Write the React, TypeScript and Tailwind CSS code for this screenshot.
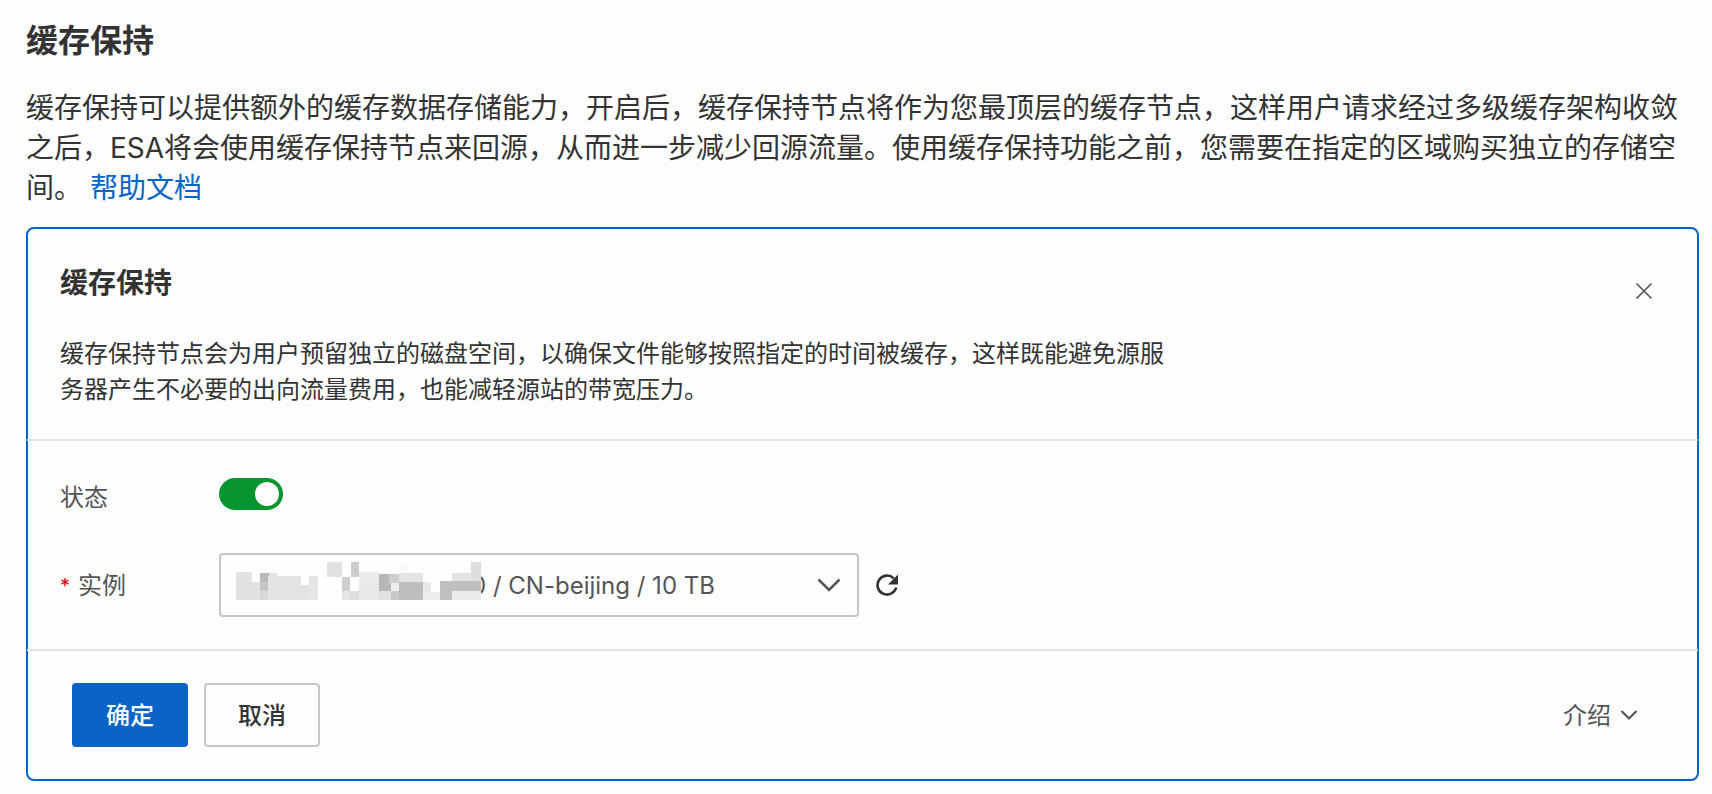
import React, { useState } from "react";

interface Cell {
  x: number;
  y: number;
  w: number;
  h: number;
  fill: string;
}

// Blocks that cover the private part of the instance id
const MASK_CELLS: Cell[] = [
  { x: 0, y: 10, w: 16, h: 28, fill: "#e2e2e2" },
  { x: 16, y: 20, w: 8, h: 18, fill: "#e2e2e2" },
  { x: 24, y: 11, w: 9, h: 9, fill: "#b9b9b9" },
  { x: 24, y: 20, w: 8, h: 9, fill: "#c5c5c5" },
  { x: 24, y: 29, w: 8, h: 9, fill: "#d8d8d8" },
  { x: 33, y: 11, w: 8, h: 3, fill: "#e4e4e4" },
  { x: 32, y: 14, w: 33, h: 24, fill: "#e3e3e3" },
  { x: 65, y: 23, w: 8, h: 15, fill: "#e3e3e3" },
  { x: 73, y: 14, w: 9, h: 9, fill: "#e3e3e3" },
  { x: 73, y: 23, w: 9, h: 15, fill: "#e7e7e7" },
  { x: 91, y: 0, w: 15, h: 15, fill: "#e2e2e2" },
  { x: 115, y: 0, w: 8, h: 15, fill: "#cccccc" },
  { x: 106, y: 15, w: 8, h: 14, fill: "#cfcfcf" },
  { x: 106, y: 29, w: 8, h: 9, fill: "#e6e6e6" },
  { x: 114, y: 29, w: 9, h: 9, fill: "#dddddd" },
  { x: 123, y: 10, w: 20, h: 11, fill: "#ebebeb" },
  { x: 123, y: 21, w: 20, h: 17, fill: "#e8e8e8" },
  { x: 143, y: 12, w: 12, h: 17, fill: "#b7b7b7" },
  { x: 143, y: 29, w: 12, h: 9, fill: "#e1e1e1" },
  { x: 153, y: 12, w: 10, h: 9, fill: "#cdcdcd" },
  { x: 155, y: 21, w: 8, h: 8, fill: "#eeeeee" },
  { x: 155, y: 29, w: 8, h: 9, fill: "#c9c9c9" },
  { x: 163, y: 0, w: 9, h: 11, fill: "#f9f9f9" },
  { x: 163, y: 11, w: 24, h: 9, fill: "#e3e3e3" },
  { x: 163, y: 20, w: 24, h: 18, fill: "#bebebe" },
  { x: 187, y: 20, w: 8, h: 10, fill: "#e8e8e8" },
  { x: 187, y: 30, w: 17, h: 8, fill: "#eeeeee" },
  { x: 204, y: 19, w: 12, h: 19, fill: "#bfbfbf" },
  { x: 216, y: 11, w: 19, h: 8, fill: "#e3e3e3" },
  { x: 216, y: 19, w: 29, h: 10, fill: "#bfbfbf" },
  { x: 216, y: 29, w: 29, h: 9, fill: "#ebebeb" },
  { x: 235, y: 0, w: 10, h: 19, fill: "#dddddd" },
];

function IdMask() {
  return (
    <svg
      width="245"
      height="38"
      viewBox="0 0 245 38"
      shapeRendering="crispEdges"
      aria-hidden="true"
      className="pointer-events-none absolute left-[17px] top-[9px]"
    >
      <rect width="245" height="38" fill="#fefefe" />
      {MASK_CELLS.map((c) => (
        <rect key={`${c.x}-${c.y}`} x={c.x} y={c.y} width={c.w} height={c.h} fill={c.fill} />
      ))}
    </svg>
  );
}

export default function App() {
  const [enabled, setEnabled] = useState(true);

  return (
    <main
      lang="zh-CN"
      className="bg-[#fdfdfd] pt-[17px] pr-[13px] pb-[13px] pl-[26px] font-[Inter,'Noto_Sans_CJK_SC',sans-serif] text-[#333]"
    >
      <h1 className="text-[32px] leading-[48px] font-semibold">缓存保持</h1>
      <p className="mt-[23px] text-[28px] leading-[40px]">
        <span>
          缓存保持可以提供额外的缓存数据存储能力，开启后，缓存保持节点将作为您最顶层的缓存节点，这样用户请求经过多级缓存架构收敛之后，ESA将会使用缓存保持节点来回源，从而进一步减少回源流量。使用缓存保持功能之前，您需要在指定的区域购买独立的存储空间。
        </span>
        <a href="#help" className="ml-2 text-[#0064c8]">帮助文档</a>
      </p>

      <section className="mt-[19px] rounded-lg border-2 border-[#0064c8]">
        {/* Header */}
        <div className="flex items-start justify-between pt-[33px] pr-[41px] pb-[31px] pl-8">
          <div>
            <h2 className="text-[28px] leading-[42px] font-semibold">缓存保持</h2>
            <p className="mt-8 max-w-[1120px] text-[24px] leading-[36px]">
              缓存保持节点会为用户预留独立的磁盘空间，以确保文件能够按照指定的时间被缓存，这样既能避免源服务器产生不必要的出向流量费用，也能减轻源站的带宽压力。
            </p>
          </div>
          <button type="button" aria-label="关闭" className="mt-[17px] cursor-pointer text-[#555]">
            <svg width="24" height="24" viewBox="0 0 24 24" fill="none" stroke="currentColor" strokeWidth="1.6">
              <path d="M4.5 4.5 19.5 19.5M19.5 4.5 4.5 19.5" />
            </svg>
          </button>
        </div>

        {/* Form */}
        <div className="-mx-px flex flex-col gap-[35px] border-y-2 border-[#e3e3e3] pt-[37px] pb-8 pl-[33px] text-[24px] text-[#555]">
          <div className="flex items-start">
            <label htmlFor="status" className="w-[159px] leading-[40px]">状态</label>
            <input
              id="status"
              type="checkbox"
              role="switch"
              checked={enabled}
              onChange={() => setEnabled(!enabled)}
              className="h-8 w-16 cursor-pointer appearance-none rounded-full bg-[#c1c1c1] p-1 before:block before:size-6 before:rounded-full before:bg-white checked:bg-[#079530] checked:before:ml-8"
            />
          </div>
          <div className="flex items-center">
            <label htmlFor="instance" className="flex w-[159px] items-center gap-2 pt-0.5 leading-[40px]">
              <span className="w-[10px] text-[20px] text-[#e00000]">*</span>
              实例
            </label>
            <div className="relative w-[640px]">
              <select
                id="instance"
                className="h-16 w-full appearance-none rounded border-2 border-[#c6c6c6] bg-transparent pt-0.5 pr-16 pl-[250px] text-[24px]"
              >
                <option>0 / CN-beijing / 10 TB</option>
              </select>
              <IdMask />
              <svg
                width="24"
                height="16"
                viewBox="0 0 24 16"
                fill="none"
                stroke="#555"
                strokeWidth="2.6"
                className="pointer-events-none absolute top-6 right-[18px]"
              >
                <path d="M1.5 2.5 12 13 22.5 2.5" />
              </svg>
            </div>
            <button type="button" aria-label="刷新" className="ml-4 cursor-pointer text-[#333]">
              <svg width="24" height="24" viewBox="0 0 24 24" fill="none">
                <path d="M18.7 5.3A9.5 9.5 0 1 0 21.2 14.5" stroke="currentColor" strokeWidth="2.6" />
                <path d="M23 1.5V11.5H13Z" fill="currentColor" />
              </svg>
            </button>
          </div>
        </div>

        {/* Footer */}
        <div className="flex items-center justify-between py-8 pr-[58px] pl-11 text-[24px]">
          <div className="flex gap-4">
            <button type="button" className="h-16 w-[116px] cursor-pointer rounded bg-[#0a64c8] pt-0.5 font-medium text-white">
              确定
            </button>
            <button type="button" className="h-16 w-[116px] cursor-pointer rounded border-2 border-[#c6c6c6] pt-0.5 font-medium">
              取消
            </button>
          </div>
          <button type="button" className="flex cursor-pointer items-center gap-2 pt-0.5 text-[#555]">
            介绍
            <svg width="20" height="12" viewBox="0 0 20 12" fill="none" stroke="currentColor" strokeWidth="2.2">
              <path d="M2.5 1 10 8.5 17.5 1" />
            </svg>
          </button>
        </div>
      </section>
    </main>
  );
}
